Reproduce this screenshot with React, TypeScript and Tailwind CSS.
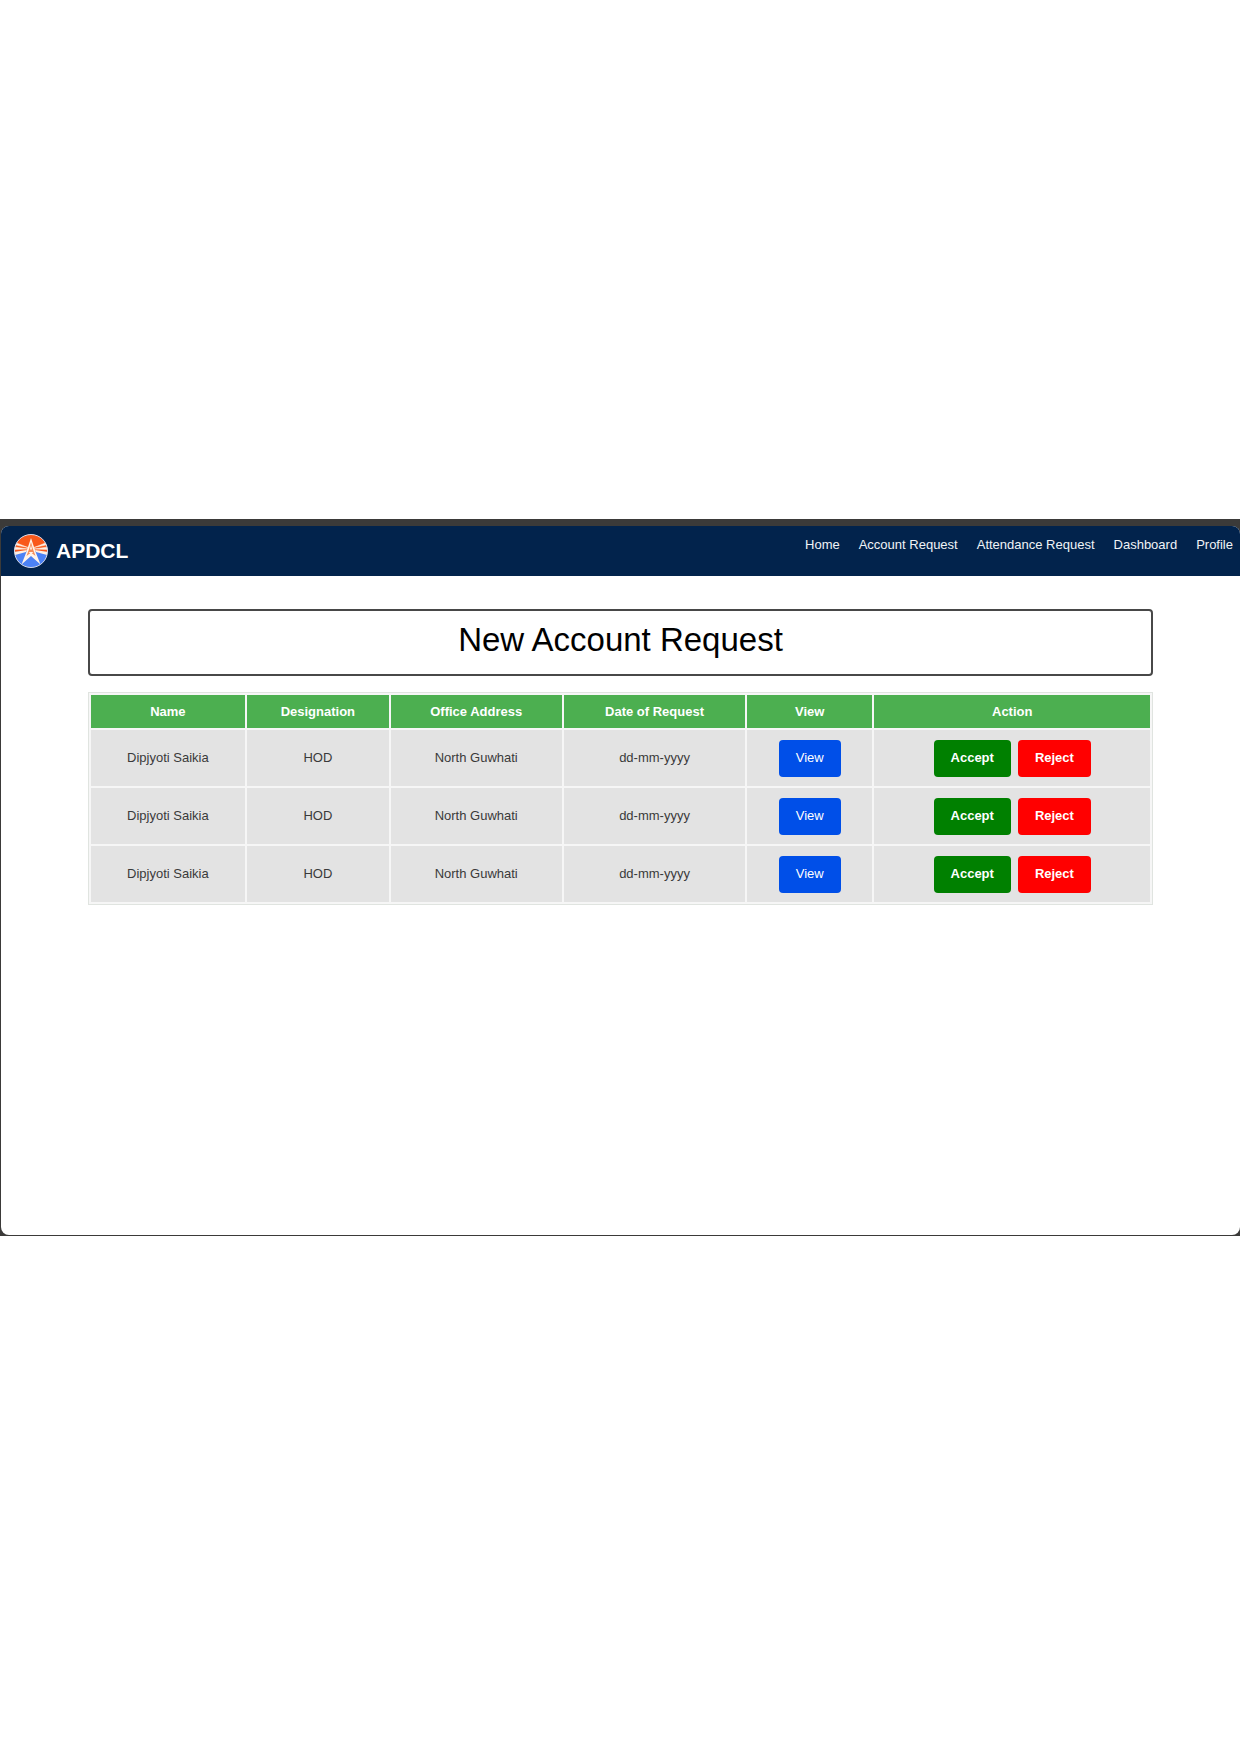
const links = ["Home", "Account Request", "Attendance Request", "Dashboard", "Profile"];

const columns = [
  { label: "Name", width: "w-[14.7%]" },
  { label: "Designation", width: "w-[13.5%]" },
  { label: "Office Address", width: "w-[16.3%]" },
  { label: "Date of Request", width: "w-[17.3%]" },
  { label: "View", width: "w-[11.9%]" },
  { label: "Action", width: "w-[26.3%]" },
];

const requests = [1, 2, 3].map((id) => ({
  id,
  name: "Dipjyoti Saikia",
  designation: "HOD",
  office: "North Guwhati",
  date: "dd-mm-yyyy",
}));

function Logo() {
  return (
    <svg viewBox="0 0 34 34" className="h-[34px] w-[34px]" aria-hidden="true">
      <defs>
        <clipPath id="disc">
          <circle cx="17" cy="17" r="16.5" />
        </clipPath>
      </defs>
      <g clipPath="url(#disc)">
        <rect width="34" height="34" fill="#4c82f5" />
        <path d="M0 0H34V18L17 17L0 18Z" fill="#f9591b" />
        <path
          d="M0 8L14 13.5L0 10.5ZM34 8L20 13.5L34 10.5ZM0 13L14 15L0 15.5ZM34 13L20 15L34 15.5Z"
          fill="#fff0e4"
          stroke="#fff0e4"
          strokeWidth="0.5"
        />
        <path d="M0 18L13 16L12 18L1 21ZM34 18L21 16L22 18L33 21Z" fill="#fff0e4" />
        <path
          d="M17 4L20 13L22 19L26.5 30.5L17 22L7.5 30.5L12 19L14 13Z"
          fill="#fff4ea"
        />
        <path d="M17 8L18.6 14L21.5 22L17 18.5L12.5 22L15.4 14Z" fill="#f58a55" />
        <path d="M17 11L18 15L17 16L16 15ZM14.5 18L19.5 18L17 20Z" fill="#fff4ea" />
      </g>
      <circle cx="17" cy="17" r="16.5" fill="none" stroke="#d5d9e8" strokeWidth="1" />
    </svg>
  );
}

const cell = "bg-[#e3e3e3] text-center";
const button = "h-[37px] rounded-[4px] px-[17px] text-white";

export default function App() {
  return (
    <div className="min-h-screen bg-white pt-[519px] font-['Liberation_Sans',Arial,sans-serif] text-[13px] leading-[18px]">
      <div className="bg-[#3b3a39] pt-[7px] pb-px pl-px">
        <div className="min-h-[709px] overflow-hidden rounded-lg bg-white">
          <header className="flex h-[50px] justify-between bg-[#02234c] pr-[7px] pl-[13px] text-white">
            <div className="flex items-center gap-2">
              <Logo />
              <span className="text-[21px] leading-6 font-bold">APDCL</span>
            </div>
            <nav className="flex gap-[19px] pt-[10px]">
              {links.map((link) => (
                <a key={link} href="#" className="h-[18px] text-[#f0f3f7]">
                  {link}
                </a>
              ))}
            </nav>
          </header>

          <main className="mx-auto w-[86%] pt-[33px]">
            <h1 className="h-[67px] rounded-[4px] border-2 border-[#484848] pt-2 text-center text-[33px] leading-[42px] text-black">
              New Account Request
            </h1>
            <table className="mt-4 w-full table-fixed border-separate border-spacing-[2px] border border-[#e0e4e0] bg-[#f6f6f6]">
              <thead>
                <tr className="h-[33px]">
                  {columns.map((column) => (
                    <th
                      key={column.label}
                      scope="col"
                      className={`${column.width} bg-[#4caf50] text-center font-bold text-white`}
                    >
                      {column.label}
                    </th>
                  ))}
                </tr>
              </thead>
              <tbody className="text-[#3a3a3a]">
                {requests.map((request) => (
                  <tr key={request.id} className="h-14">
                    <td className={cell}>{request.name}</td>
                    <td className={cell}>{request.designation}</td>
                    <td className={cell}>{request.office}</td>
                    <td className={cell}>{request.date}</td>
                    <td className={cell}>
                      <button type="button" className={`${button} bg-[#004fe8]`}>
                        View
                      </button>
                    </td>
                    <td className={cell}>
                      <div className="flex justify-center gap-[7px] font-bold">
                        <button type="button" className={`${button} bg-[#008000]`}>
                          Accept
                        </button>
                        <button type="button" className={`${button} bg-[#ff0000]`}>
                          Reject
                        </button>
                      </div>
                    </td>
                  </tr>
                ))}
              </tbody>
            </table>
          </main>
        </div>
      </div>
    </div>
  );
}
